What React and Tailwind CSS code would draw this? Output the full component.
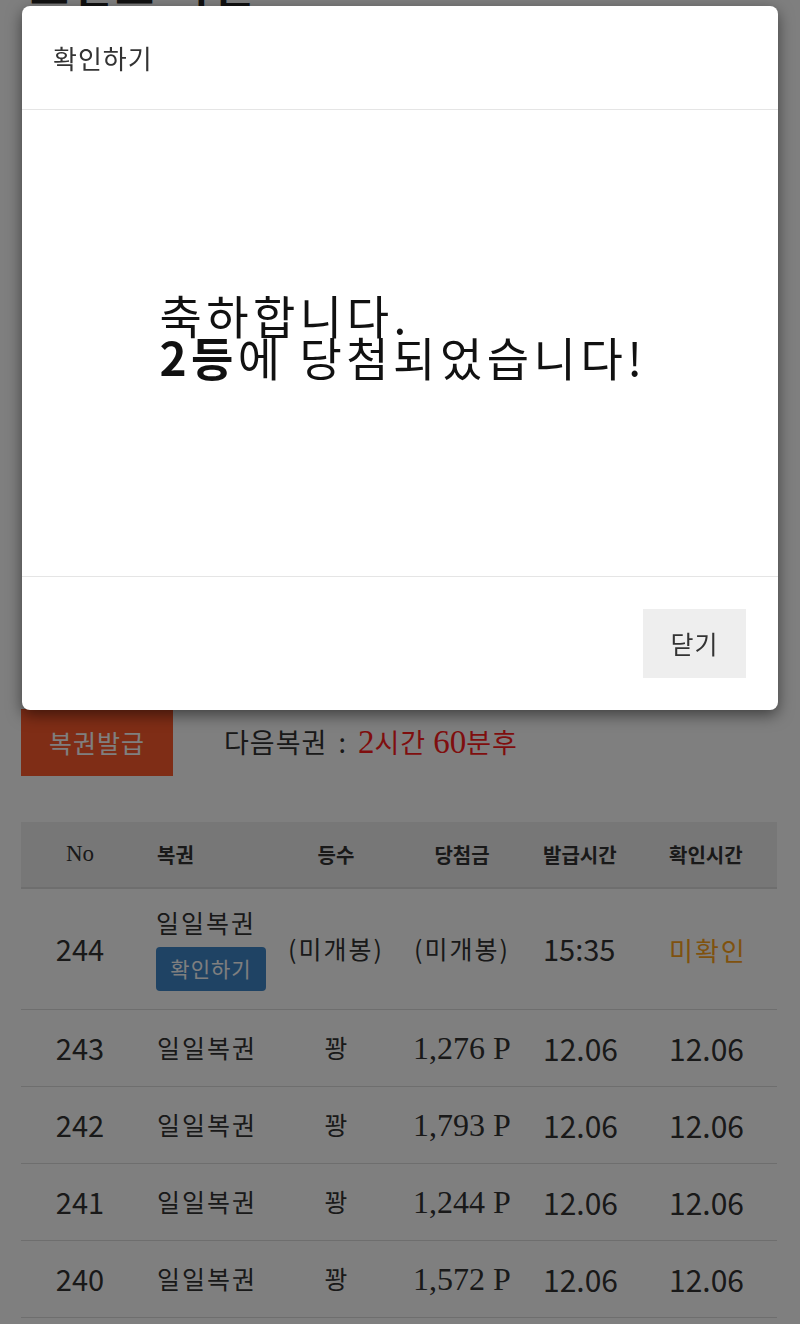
import React from "react";

const KR = "font-['Noto_Sans_CJK_KR',sans-serif]";
const SERIF = "font-['Liberation_Serif','Noto_Sans_CJK_KR',serif]";

const rows = [
  { no: "243", amt: "1,276 P" },
  { no: "242", amt: "1,793 P" },
  { no: "241", amt: "1,244 P" },
  { no: "240", amt: "1,572 P" },
];

const COLS = "grid grid-cols-[118px_144px_106px_146px_117px_125px]";

export default function App() {
  return (
    <div className={`relative min-h-[1324px] overflow-hidden bg-white text-[#333] ${KR}`}>
      <div className="px-[21px]">
        <h1 className="-mt-[38px] ml-[9px] text-[42px] font-bold leading-[48px] tracking-[4px] text-[#222]">포인트 복권</h1>
        <ul className="h-[699px] pl-[30px] pt-[20px] text-[20px] leading-[48px] text-[#444]">
          <li>매일 한 장의 복권이 발급됩니다.</li>
          <li>복권은 발급 후 확인할 수 있습니다.</li>
          <li>당첨금은 포인트로 지급됩니다.</li>
        </ul>

        <div className="flex items-center">
          <button className="h-[67px] w-[152px] bg-[#ff5a2c] text-[25px] tracking-[1px] text-white">복권발급</button>
          <div className="ml-[51px] text-[27px] tracking-[1px] text-[#333]">
            다음복권 <span className="mx-[4px]">:</span>{" "}
            <span className="text-[#ff1c1c]">
              <span className={SERIF + " text-[33px] tracking-normal"}>2</span>시간{" "}
              <span className={SERIF + " text-[33px] tracking-normal"}>60</span>분후
            </span>
          </div>
        </div>

        <div className="mt-[46px] w-[756px]">
          <div className={`${COLS} h-[67px] items-center border-b-2 border-[#dddddd] bg-[#eeeeee] text-[20px] font-bold`}>
            <div className={`text-center font-normal ${SERIF} text-[23px]`}>No</div>
            <div className="pl-[18px]">복권</div>
            <div className="text-center">등수</div>
            <div className="text-center">당첨금</div>
            <div className="pl-[8px]">발급시간</div>
            <div className="pl-[17px]">확인시간</div>
          </div>

          <div className={`${COLS} h-[121px] items-center border-b border-[#dddddd]`}>
            <div className="text-center text-[29px]">244</div>
            <div className="flex flex-col items-start pl-[17px]">
              <div className="text-[25px] leading-[30px] tracking-[2px]">일일복권</div>
              <span className="mt-[10px] flex h-[44px] w-[110px] items-center justify-center rounded-[4px] bg-[#3f86c8] text-[21px] tracking-[1px] text-white">확인하기</span>
            </div>
            <div className="whitespace-nowrap text-center text-[25px] tracking-[2px]">(미개봉)</div>
            <div className="whitespace-nowrap text-center text-[25px] tracking-[2px]">(미개봉)</div>
            <div className="pl-[8px] text-[29px]">15:35</div>
            <div className="pl-[17px] text-[26px] tracking-[2px] text-[#ffa41c]">미확인</div>
          </div>

          {rows.map((r) => (
            <div key={r.no} className={`${COLS} h-[77px] items-center border-b border-[#dddddd]`}>
              <div className="text-center text-[29px]">{r.no}</div>
              <div className="pl-[18px] text-[25px] tracking-[2px]">일일복권</div>
              <div className="text-center text-[25px]">꽝</div>
              <div className={`text-center text-[32px] ${SERIF}`}>{r.amt}</div>
              <div className="pl-[8px] text-[30px]">12.06</div>
              <div className="pl-[17px] text-[30px]">12.06</div>
            </div>
          ))}
        </div>
      </div>

      <div className="fixed inset-0 bg-black/50" />

      <div className="absolute left-[22px] top-[6px] flex w-[756px] flex-col rounded-[8px] bg-white shadow-[0_5px_15px_rgba(0,0,0,0.5)]">
        <div className="flex h-[104px] items-center border-b border-[#e5e5e5] px-[31px]">
          <h4 className="text-[26px] tracking-[1px] text-[#333]">확인하기</h4>
        </div>
        <div className="flex h-[466px] items-center justify-center pb-[16px] pl-[6px]">
          <div className="text-left text-[46px] leading-[42px] tracking-[4.5px] text-[#111]">
            축하합니다.
            <br />
            <b>2등</b>에 당첨되었습니다!
          </div>
        </div>
        <div className="flex h-[134px] items-center justify-end border-t border-[#e5e5e5] px-[32px]">
          <button className="h-[69px] w-[103px] bg-[#eeeeee] text-[25px] tracking-[1px] text-[#333]">닫기</button>
        </div>
      </div>
    </div>
  );
}
